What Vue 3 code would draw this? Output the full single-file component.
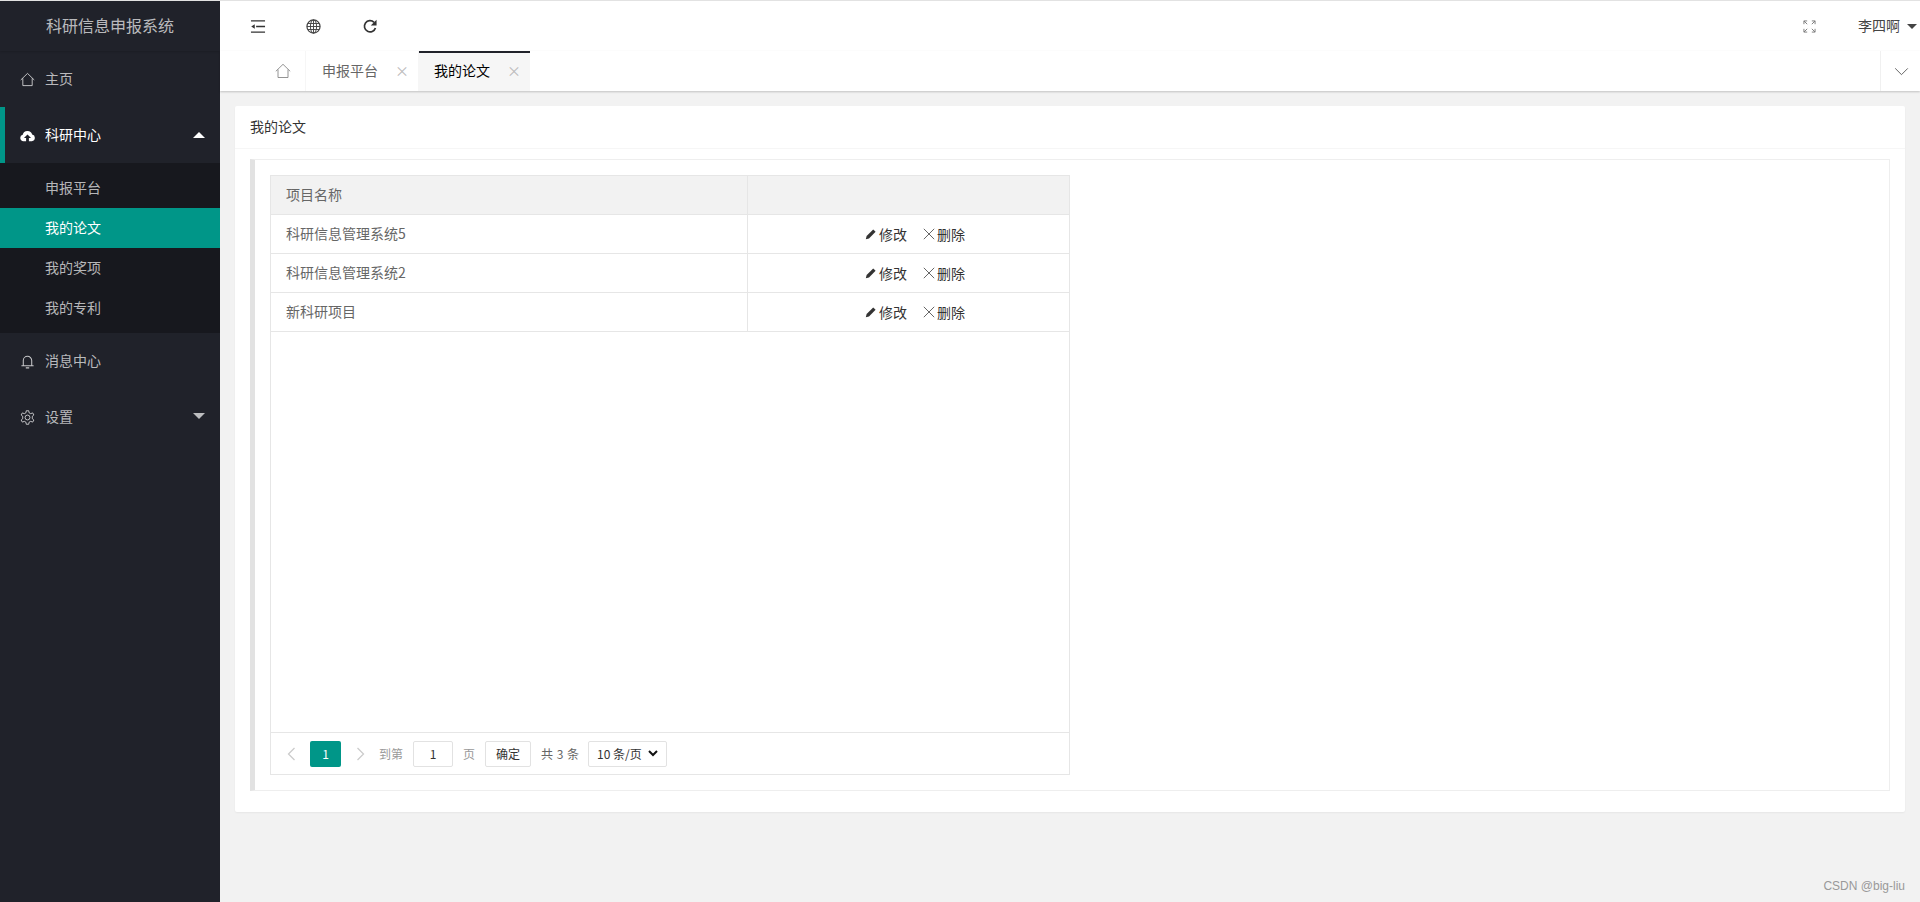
<script setup>
const rows = ['科研信息管理系统5', '科研信息管理系统2', '新科研项目']
const subs = ['申报平台', '我的论文', '我的奖项', '我的专利']
</script>

<template>
  <div class="shell">
    <aside class="side">
      <div class="logo">科研信息申报系统</div>
      <div class="nav-item">
        <svg class="nav-ico" viewBox="0 0 16 16"><path d="M.8 8.500 8 1.500l7.200 7M3 6.800v7.700h10V6.800" fill="none" stroke="currentColor" stroke-width="1"/></svg>
        <span>主页</span>
      </div>
      <div class="nav-item open">
        <svg class="nav-ico" viewBox="0 0 16 16"><path d="M3.600 14a3.400 3.400 0 0 1-.7-6.700 5.200 5.200 0 0 1 10.100-.4 3.600 3.600 0 0 1-.4 7.100H9.500v-3.300h2.300L8 6.800l-3.800 3.900h2.300V14z" fill="#fff"/></svg>
        <span>科研中心</span>
        <i class="caret up"></i>
      </div>
      <div class="subnav">
        <div v-for="(s, i) in subs" :key="s" class="sub-item" :class="{ active: i === 1 }">{{ s }}</div>
      </div>
      <div class="nav-item">
        <svg class="nav-ico" viewBox="0 0 16 16"><path d="M1.500 12.500h13M3.500 12.500V7a4.500 4.500 0 0 1 9 0v5.500M6.200 14.800h3.600" fill="none" stroke="currentColor" stroke-width="1.100"/></svg>
        <span>消息中心</span>
      </div>
      <div class="nav-item">
        <svg class="nav-ico" viewBox="0 0 16 16"><circle cx="8" cy="8" r="2.600" fill="none" stroke="currentColor"/><path d="M6.700.8h2.600l.4 2.200 1.700.9 2.100-.8 1.300 2.200-1.700 1.400v2.600l1.700 1.400-1.300 2.200-2.100-.8-1.700.9-.4 2.200H6.700l-.4-2.200-1.700-.9-2.100.8L1.200 10.700l1.700-1.400V6.700L1.200 5.300l1.300-2.200 2.100.8 1.700-.9z" fill="none" stroke="currentColor" stroke-width="1"/></svg>
        <span>设置</span>
        <i class="caret down"></i>
      </div>
    </aside>

    <div class="main">
      <header class="top">
        <div class="top-left">
          <svg class="t-ico" viewBox="0 0 16 16"><path d="M.5 2h15M6 8h9.500M.5 14h15" fill="none" stroke="#333" stroke-width="1.500"/><path d="M.8 8 4.500 5.700v4.600z" fill="#333"/></svg>
          <svg class="t-ico globe" viewBox="0 0 16 16"><circle cx="8" cy="8" r="7" fill="none" stroke="#444" stroke-width="1.300"/><ellipse cx="8" cy="8" rx="3.300" ry="7" fill="none" stroke="#444"/><path d="M8 1v14M1 8h14M2 4.800h12M2 11.200h12" fill="none" stroke="#444"/></svg>
          <svg class="t-ico refresh" viewBox="0 0 16 16"><path d="M13.800 9.500A6 6 0 1 1 12.300 3.500" fill="none" stroke="#333" stroke-width="1.800"/><path d="M15 .8v6.200H8.800z" fill="#333"/></svg>
        </div>
        <div class="top-right">
          <svg class="full" viewBox="0 0 14 14"><path d="M1 4.500V1h3.500M9.500 1H13v3.500M13 9.500V13H9.500M4.500 13H1V9.500M1 1l3.500 3.500M13 1 9.500 4.500M13 13 9.500 9.500M1 13l3.500-3.500" fill="none" stroke="#777" stroke-width="1"/></svg>
          <span class="user">李四啊</span>
          <i class="user-caret"></i>
        </div>
      </header>

      <nav class="tabs">
        <div class="tab home">
          <svg viewBox="0 0 16 16" class="home-ico"><path d="M.8 8.300 8 1.300l7.200 7M3 6.500v8h10v-8" fill="none" stroke="#888" stroke-width=".9"/></svg>
        </div>
        <div class="tab normal"><span>申报平台</span><b class="x">×</b></div>
        <div class="tab current"><span>我的论文</span><b class="x">×</b></div>
        <div class="tab-more">
          <svg viewBox="0 0 16 10" class="more-ico"><path d="M1 1.500 8 8.500l7-7" fill="none" stroke="#555" stroke-width="1"/></svg>
        </div>
      </nav>

      <main class="content">
        <section class="card">
          <div class="card-head">我的论文</div>
          <div class="card-body">
            <div class="quote">
              <div class="grid">
                <div class="g-row g-head">
                  <div class="c1">项目名称</div>
                  <div class="c2"></div>
                </div>
                <div v-for="r in rows" :key="r" class="g-row">
                  <div class="c1">{{ r }}</div>
                  <div class="c2 ops">
                    <span class="op">
                      <svg class="pen" viewBox="0 0 12 12"><path d="M.8 11.200 1.600 8 8.200 1.400l2.400 2.400L4 10.400z" fill="#333"/></svg>修改
                    </span>
                    <span class="op">
                      <svg class="del" viewBox="0 0 12 12"><path d="m.8.800 10.400 10.400M11.200.8.800 11.200" fill="none" stroke="#555" stroke-width=".9"/></svg>删除
                    </span>
                  </div>
                </div>
                <div class="g-space"></div>
                <div class="pager">
                  <svg class="pg-arrow" viewBox="0 0 8 14"><path d="M7 1 1 7l6 6" fill="none" stroke="#ccc" stroke-width="1.300"/></svg>
                  <span class="pg-cur">1</span>
                  <svg class="pg-arrow r" viewBox="0 0 8 14"><path d="m1 1 6 6-6 6" fill="none" stroke="#ccc" stroke-width="1.300"/></svg>
                  <span class="pg-muted to">到第</span>
                  <span class="pg-input">1</span>
                  <span class="pg-muted unit">页</span>
                  <span class="pg-btn">确定</span>
                  <span class="pg-total">共 3 条</span>
                  <span class="pg-select"><span>10 条/页</span>
                    <svg viewBox="0 0 10 7" class="sel-ico"><path d="m1 1 4 4 4-4" fill="none" stroke="#111" stroke-width="2"/></svg>
                  </span>
                </div>
              </div>
            </div>
          </div>
        </section>
      </main>
      <div class="mark">CSDN @big-liu</div>
    </div>
  </div>
</template>

<style>
html, body { margin: 0; padding: 0; }
</style>

<style scoped>
.shell {
  display: flex;
  height: 902px;
  width: 1920px;
  overflow: hidden;
  font-family: "Noto Sans CJK SC", "Noto Sans", sans-serif;
  font-size: 14px;
  color: #666;
  background: #f2f2f2;
  box-sizing: border-box;
  border-top: 1px solid #e2e2e2;
}
.side {
  width: 220px;
  flex: none;
  background: #20222a;
  color: rgba(255, 255, 255, .7);
}
.logo {
  height: 50px;
  line-height: 48px;
  font-size: 16px;
  padding-left: 46px;
  box-shadow: 0 1px 2px rgba(0, 0, 0, .15);
}
.nav-item {
  height: 56px;
  display: flex;
  align-items: center;
  padding-left: 20px;
  position: relative;
  box-sizing: border-box;
}
.nav-item span { margin-left: 10px; position: relative; top: -1px; }
.nav-ico { width: 15px; height: 15px; color: rgba(255, 255, 255, .75); flex: none; }
.nav-item.open { border-left: 5px solid #009688; padding-left: 15px; color: #fff; }
.caret {
  position: absolute;
  right: 15px;
  top: 25px;
  width: 0;
  height: 0;
  border: 6px solid transparent;
}
.caret.up { border-bottom-color: #fff; border-top-width: 0; }
.caret.down { border-top-color: rgba(255, 255, 255, .7); border-bottom-width: 0; top: 24px; }
.subnav { background: #17181e; padding: 5px 0; }
.sub-item { height: 40px; line-height: 38px; padding-left: 45px; }
.sub-item.active { background: #009688; color: #fff; }

.main { flex: 1; min-width: 0; display: flex; flex-direction: column; position: relative; }
.top {
  height: 50px;
  flex: none;
  background: #fff;
  display: flex;
  align-items: center;
  justify-content: space-between;
}
.top-left { display: flex; align-items: center; gap: 40px; padding: 1px 0 0 30px; }
.t-ico { width: 16px; height: 15px; display: block; }
.globe { width: 15px; }
.refresh { margin-left: 1px; }
.top-right { display: flex; align-items: center; padding-right: 3px; }
.full { width: 13px; height: 13px; margin-right: 42px; }
.user { color: #444; position: relative; top: -1px; }
.user-caret {
  width: 0; height: 0; margin-left: 7px;
  border: 5.500px solid transparent;
  border-top-color: #444;
  border-bottom-width: 0;
}
.tabs {
  height: 40px;
  flex: none;
  background: #fff;
  display: flex;
  padding-left: 40px;
  box-shadow: 0 1px 2px rgba(0, 0, 0, .2);
  position: relative;
  z-index: 1;
}
.tab {
  display: flex;
  align-items: center;
  height: 40px;
  padding-left: 15px;
  border-right: 1px solid #f6f6f6;
  box-sizing: border-box;
}
.tab span { flex: none; position: relative; top: -1px; }
.tab.home { width: 46px; }
.home-ico { width: 16px; height: 16px; }
.tab.normal { width: 113px; padding-left: 16px; }
.x { margin-left: 17px; font-weight: 400; color: #bbb; font-size: 14px; position: relative; top: -1px; }
.tab.current {
  background: #f6f6f6;
  color: #000;
  box-shadow: inset 0 2px 0 #20222a;
  width: 111px;
  border-right: none;
}
.tab-more {
  margin-left: auto;
  width: 40px;
  padding-left: 1px;
  border-left: 1px solid #f0f0f0;
  display: flex;
  align-items: center;
  justify-content: center;
  box-sizing: border-box;
}
.more-ico { width: 15px; height: 9px; }

.content { padding: 15px; flex: 1; min-height: 0; }
.card { background: #fff; box-shadow: 0 1px 2px rgba(0, 0, 0, .05); border-radius: 2px; }
.card-head {
  height: 42px;
  line-height: 40px;
  padding-left: 15px;
  color: #333;
  border-bottom: 1px solid #f6f6f6;
}
.card-body { padding: 10px 15px 21px; }
.quote {
  border: 1px solid #eee;
  border-left: 5px solid #e2e2e2;
  padding: 15px;
  height: 632px;
  box-sizing: border-box;
}
.grid {
  width: 800px;
  height: 600px;
  box-sizing: border-box;
  border: 1px solid #e6e6e6;
  display: flex;
  flex-direction: column;
}
.g-row {
  display: flex;
  height: 39px;
  flex: none;
  border-bottom: 1px solid #e6e6e6;
  box-sizing: border-box;
}
.g-head { background: #f2f2f2; }
.c1 {
  width: 477px;
  flex: none;
  border-right: 1px solid #e6e6e6;
  box-sizing: border-box;
  padding: 0 0 2px 15px;
  display: flex;
  align-items: center;
}
.c2 { flex: 1; }
.ops {
  display: flex;
  align-items: center;
  justify-content: center;
  gap: 16px;
  color: #333;
  padding-left: 13px;
}
.op { display: inline-flex; align-items: center; }
.pen { width: 12px; height: 12px; margin-right: 2px; }
.del { width: 12px; height: 12px; margin-right: 2px; }
.g-space { flex: 1; }
.pager {
  height: 42px;
  flex: none;
  border-top: 1px solid #e6e6e6;
  box-sizing: border-box;
  display: flex;
  align-items: center;
  padding-left: 16px;
  font-size: 12px;
  white-space: nowrap;
}
.pager > * { flex: none; }
.pg-arrow { width: 9px; height: 14px; }
.pg-arrow.r { margin-left: 15px; }
.pg-cur {
  width: 31px;
  height: 26px;
  line-height: 25px;
  text-align: center;
  background: #009688;
  color: #fff;
  border-radius: 2px;
  margin-left: 14px;
}
.pg-muted { color: #999; }
.to { margin-left: 14px; }
.pg-input {
  width: 40px;
  height: 26px;
  line-height: 23px;
  box-sizing: border-box;
  border: 1px solid #e2e2e2;
  border-radius: 2px;
  text-align: center;
  color: #333;
  margin-left: 10px;
}
.pg-muted.unit { margin-left: 10px; }
.pg-btn {
  width: 46px;
  height: 26px;
  line-height: 24px;
  box-sizing: border-box;
  border: 1px solid #e2e2e2;
  border-radius: 2px;
  text-align: center;
  color: #333;
  margin-left: 10px;
}
.pg-total { color: #666; margin-left: 10px; word-spacing: 1px; }
.pg-select {
  width: 79px;
  height: 26px;
  box-sizing: border-box;
  border: 1px solid #e2e2e2;
  border-radius: 2px;
  color: #333;
  margin-left: 9px;
  padding: 0 8px;
  display: flex;
  align-items: center;
  justify-content: space-between;
}
.sel-ico { width: 10px; height: 7px; }
.mark {
  position: absolute;
  right: 15px;
  bottom: 9px;
  font-family: "Liberation Sans", sans-serif;
  font-size: 12px;
  color: #999;
}
</style>
